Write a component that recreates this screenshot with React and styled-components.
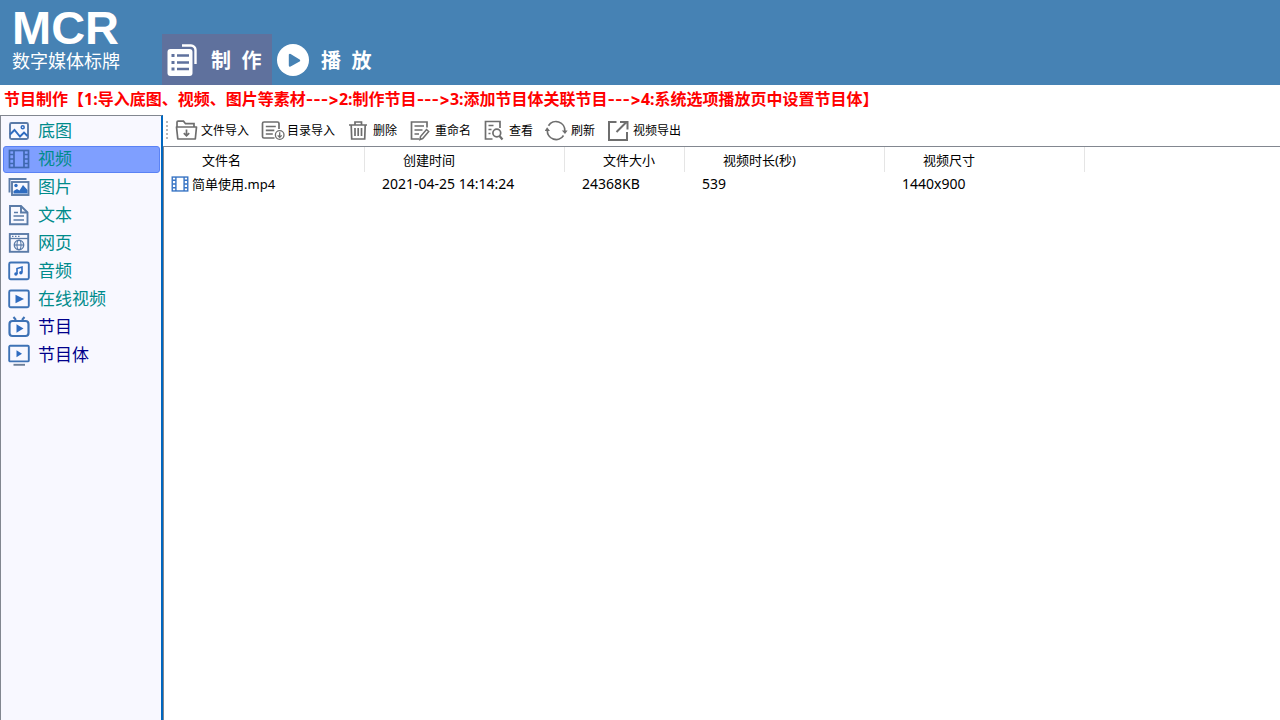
import { useState } from 'react';
import styled, { createGlobalStyle } from 'styled-components';

const GlobalStyle = createGlobalStyle`
  * {
    box-sizing: border-box;
  }

  html, body, #root {
    height: 100%;
  }

  body {
    margin: 0;
    background: #fff;
    color: #000;
    font-family: "Noto Sans", "Noto Sans CJK SC", sans-serif;
  }

  button {
    margin: 0;
    padding: 0;
    border: 0;
    background: none;
    color: inherit;
    font: inherit;
    cursor: pointer;
  }

  svg {
    display: block;
    flex-shrink: 0;
  }
`

/* ---------- header icons ---------- */

const MakeIcon = () => (
  <svg width="32" height="34" viewBox="1 0 32 34" fill="none">
    <path d="M16 2.5h9a4.5 4.5 0 0 1 4.5 4.5v14" stroke="#fff" strokeWidth="2.4" />
    <rect x="1.500" y="6" width="25" height="27" rx="3" fill="#fff" />
    <path d="M5.500 12.500h3M5.500 19.500h3M5.500 26h3" stroke="#5f719d" strokeWidth="3" />
    <path d="M11 12.500h12M11 19.500h12M11 26h12" stroke="#5f719d" strokeWidth="2.600" />
  </svg>
)

const PlayIcon = () => (
  <svg width="32" height="32" viewBox="0 0 32 32">
    <circle cx="16" cy="16" r="16" fill="#fff" />
    <path d="M13 11v10.500l9-5z" fill="#4682b4" stroke="#4682b4" strokeWidth="2.400" strokeLinejoin="round" />
  </svg>
)

/* ---------- sidebar icons ---------- */

const SideSvg = ({ children }) => (
  <svg width="22" height="22" viewBox="0 0 22 22" fill="none" stroke="#5b7ba8" strokeWidth="1.900">
    {children}
  </svg>
)

const BaseIcon = () => (
  <SideSvg>
    <rect x="2" y="3" width="18" height="16" rx="1.500" />
    <circle cx="14.700" cy="7.300" r="1.500" stroke="#2f6cc0" strokeWidth="1.500" />
    <path d="M2 14.500l4.500-4.500 5.500 6.500 4-4 3.500 3.500" stroke="#2f6cc0" />
  </SideSvg>
)

const FilmIcon = ({ size = 22, frame = '#3f68b0', fill = 'none' }) => (
  <svg width={size} height={size} viewBox="0 0 22 22" fill="none" stroke={frame} strokeWidth="1.700">
    <rect x="1.500" y="2.500" width="19" height="17" fill={fill} />
    <path d="M6 2.500v17M16 2.500v17" />
    <path d="M2 6.500h4M2 11h4M2 15.500h4M16 6.500h4M16 11h4M16 15.500h4" />
  </svg>
)

const PictureIcon = () => (
  <SideSvg>
    <path d="M1.500 16.500V3h17" />
    <rect x="4" y="6" width="16.500" height="13" />
    <circle cx="8" cy="9.500" r="1.700" fill="#2f6cc0" stroke="none" />
    <path d="M5.500 17.500V15l3.500-2 2.500 1.500 3.500-5.500 4.500 5v3.500z" fill="#2f6cc0" stroke="none" />
  </SideSvg>
)

const TextIcon = () => (
  <SideSvg>
    <path d="M13 2H2v18.200h17.500V8.500z" />
    <path d="M13 2v6.500h6.500" />
    <path d="M6 8.500h4M5.500 12h10.500M5.500 16h10.500" strokeWidth="1.700" />
  </SideSvg>
)

const WebIcon = () => (
  <SideSvg>
    <rect x="1.800" y="2" width="18.400" height="17.800" />
    <path d="M2 6.500h18" strokeWidth="1.300" />
    <path d="M4 4.400h1.500M7 4.400h1.500M10 4.400h1.500" strokeWidth="1.300" />
    <circle cx="11" cy="13" r="4.700" strokeWidth="1.400" />
    <ellipse cx="11" cy="13" rx="2" ry="4.700" strokeWidth="1.100" />
    <path d="M6.300 13h9.400" strokeWidth="1.200" />
  </SideSvg>
)

const AudioIcon = () => (
  <SideSvg>
    <rect x="1.200" y="2.500" width="19.600" height="16.800" rx="1.500" stroke="#3d72b5" />
    <path d="M9 14V8.500L14 7v5.500" stroke="#2f6cc0" strokeWidth="1.600" />
    <circle cx="7.900" cy="14" r="1.700" fill="#2f6cc0" stroke="none" />
    <circle cx="12.900" cy="12.800" r="1.700" fill="#2f6cc0" stroke="none" />
  </SideSvg>
)

const OnlineIcon = () => (
  <SideSvg>
    <rect x="1.200" y="2.500" width="19.600" height="16.800" rx="1.500" stroke="#3d72b5" />
    <path d="M7.500 6.800v8.400l8.500-4.200z" fill="#2f6cc0" stroke="none" />
  </SideSvg>
)

const ProgramIcon = () => (
  <SideSvg>
    <rect x="1.500" y="5" width="19" height="15" rx="3" stroke="#3d72b5" strokeWidth="2.200" />
    <path d="M5.500 1l2.500 3M16.500 1l-2.500 3" stroke="#3d72b5" strokeWidth="2" />
    <path d="M8.500 8.200v8.600l7-4.300z" fill="#2f6cc0" stroke="none" />
  </SideSvg>
)

const ProgramSetIcon = () => (
  <SideSvg>
    <rect x="1.200" y="1.800" width="19.600" height="15.600" rx="1" stroke="#3d72b5" />
    <path d="M8.500 6.200v7l5.500-3.500z" fill="#2f6cc0" stroke="none" />
    <path d="M5.500 20.800h11.500" stroke="#6d7f98" />
  </SideSvg>
)

/* ---------- toolbar icons ---------- */

const ToolSvg = ({ children }) => (
  <svg width="24" height="24" viewBox="0 0 24 24" fill="none" stroke="#6e6e6e" strokeWidth="1.700">
    {children}
  </svg>
)

const FolderInIcon = () => (
  <ToolSvg>
    <path d="M2 9V4.200q0-1 1-1h5.500l2 2.500h8.500V9" />
    <path d="M1.500 9h20l-1.200 12H2.800z" strokeLinejoin="round" />
    <path d="M11.500 11.500v6.500M8.800 15.200l2.700 2.700 2.700-2.700" />
  </ToolSvg>
)

const ListInIcon = () => (
  <ToolSvg>
    <path d="M18 11V5.500Q18 4 16.500 4H3Q1.500 4 1.500 5.500v13Q1.500 20 3 20h10.500" />
    <path d="M4.800 8.500h10M4.800 12.300h8.500M4.800 16h7" />
    <circle cx="18.700" cy="17" r="4.300" strokeWidth="1.300" />
    <path d="M18.700 14.200v5M16.700 17.400l2 2 2-2" strokeWidth="1.300" />
  </ToolSvg>
)

const TrashIcon = () => (
  <ToolSvg>
    <path d="M2 7h18M8 7V4h6.500v3M4.200 7l.5 14h13l.5-14" />
    <path d="M8 10v8M11.200 10v8M14.500 10v8" />
  </ToolSvg>
)

const RenameIcon = () => (
  <ToolSvg>
    <path d="M18 9.500V4H2.500v17H10" />
    <path d="M5.500 8h9.500M5.500 12h8M5.500 16h4.500" />
    <path d="M17.500 11.500l2.200 2-6 7-2.800 1 .6-3z" strokeWidth="1.500" />
  </ToolSvg>
)

const ViewIcon = () => (
  <ToolSvg>
    <path d="M17 10V3.500H2.500V21H9.500" />
    <path d="M5.500 7.500h5M5.500 11.500h3M5.500 15.500h2" />
    <circle cx="13.800" cy="15" r="3.900" />
    <path d="M16.500 18l3 3.500" strokeWidth="2.200" />
  </ToolSvg>
)

const RefreshIcon = () => (
  <ToolSvg>
    <path d="M3.500 7.800A8.800 8.800 0 0 1 19.800 13M2.300 12.500A8.800 8.800 0 0 0 18.500 17.500" />
    <path d="M-.3 13l2.400-3.800L5 13zM16.800 12.500H22.600L20 16z" fill="#6e6e6e" stroke="none" />
  </ToolSvg>
)

const ExportIcon = () => (
  <ToolSvg>
    <path d="M9.500 4H2v18h18V14" strokeWidth="2" />
    <path d="M9.500 14L19.500 4M13 4h7.500v7.500" strokeWidth="2" />
  </ToolSvg>
)

const menu = [
  { label: '底图', icon: BaseIcon },
  { label: '视频', icon: FilmIcon },
  { label: '图片', icon: PictureIcon },
  { label: '文本', icon: TextIcon },
  { label: '网页', icon: WebIcon },
  { label: '音频', icon: AudioIcon },
  { label: '在线视频', icon: OnlineIcon },
  { label: '节目', icon: ProgramIcon, program: true },
  { label: '节目体', icon: ProgramSetIcon, program: true },
]

const tools = [
  { label: '文件导入', icon: FolderInIcon },
  { label: '目录导入', icon: ListInIcon },
  { label: '删除', icon: TrashIcon },
  { label: '重命名', icon: RenameIcon },
  { label: '查看', icon: ViewIcon },
  { label: '刷新', icon: RefreshIcon },
  { label: '视频导出', icon: ExportIcon },
]

const columns = [
  { label: '文件名', width: 201 },
  { label: '创建时间', width: 200 },
  { label: '文件大小', width: 120 },
  { label: '视频时长(秒)', width: 200 },
  { label: '视频尺寸', width: 200 },
]

const files = [
  { name: '简单使用.mp4', created: '2021-04-25 14:14:24', size: '24368KB', duration: '539', dimension: '1440x900' },
]

export default function App() {
  const [tab, setTab] = useState('make');
  const [current, setCurrent] = useState('视频');

  return (
    <>
      <GlobalStyle />
      <Page>
        <Header>
          <Brand>
            <BrandName>MCR</BrandName>
            <BrandSub>数字媒体标牌</BrandSub>
          </Brand>
          <Tabs>
            <Tab $active={tab === 'make'} onClick={() => setTab('make')}><MakeIcon />{'制  作'}</Tab>
            <Tab $active={tab === 'play'} onClick={() => setTab('play')}><PlayIcon />{'播  放'}</Tab>
          </Tabs>
        </Header>

        <Steps>
          节目制作【1:导入底图、视频、图片等素材<Arrow>---&gt;</Arrow>2:制作节目<Arrow>---&gt;</Arrow>3:添加节目体关联节目<Arrow>---&gt;</Arrow>4:系统选项播放页中设置节目体】
        </Steps>

        <Body>
          <Sidebar>
            {menu.map(({ label, icon: Icon, program }) => (
              <MenuItem
                key={label}
                $active={label === current}
                $program={program}
                onClick={() => setCurrent(label)}
              >
                <Icon />{label}
              </MenuItem>
            ))}
          </Sidebar>

          <Content>
            <Toolbar>
              <Grip />
              {tools.map(({ label, icon: Icon }) => (
                <Tool key={label}><Icon />{label}</Tool>
              ))}
            </Toolbar>
            <List>
              <Table>
                <colgroup>
                  {columns.map((c) => <Col key={c.label} $width={c.width} />)}
                </colgroup>
                <thead>
                  <tr>{columns.map((c) => <th key={c.label}>{c.label}</th>)}</tr>
                </thead>
                <tbody>
                  {files.map((f) => (
                    <tr key={f.name}>
                      <td><FileName><FilmIcon size={18} frame="#3673c4" fill="#fff" />{f.name}</FileName></td>
                      <td>{f.created}</td>
                      <td>{f.size}</td>
                      <td>{f.duration}</td>
                      <td>{f.dimension}</td>
                    </tr>
                  ))}
                </tbody>
              </Table>
            </List>
          </Content>
        </Body>
      </Page>
    </>
  )
}

const Page = styled.div`
  display: flex;
  flex-direction: column;
  min-height: 100%;
`

const Header = styled.header`
  display: flex;
  align-items: flex-end;
  height: 85px;
  background: #4682b4;
  color: #fff;
`

const Brand = styled.div`
  width: 162px;
  padding: 0 0 12px 12px;
`

const BrandName = styled.div`
  font: bold 47px/42px "Liberation Sans", sans-serif;
`

const BrandSub = styled.div`
  font-size: 18px;
  line-height: 24px;
`

const Tabs = styled.nav`
  display: flex;
`

const Tab = styled.button`
  display: flex;
  align-items: center;
  gap: 12px;
  width: 110px;
  height: 51px;
  padding-left: 5px;
  background: ${({ $active }) => ($active ? '#5f719d' : 'transparent')};
  font-size: 20px;
  font-weight: bold;
  white-space: pre;
`

const Steps = styled.p`
  margin: 0;
  padding: 0 4px 2px;
  color: #f00;
  font-size: 16px;
  font-weight: bold;
  line-height: 28px;
`

const Arrow = styled.span`
  font-family: Inter, sans-serif;
  font-variant-ligatures: none;
`

const Body = styled.div`
  display: flex;
  flex: 1;
`

const Sidebar = styled.nav`
  display: flex;
  flex-direction: column;
  gap: 1px;
  width: 163px;
  padding: 2px 1px 0 2px;
  border-top: 1px solid #828790;
  border-left: 1px solid #828790;
  border-right: 2px solid #0067c0;
  background: #f8f8ff;
`

const MenuItem = styled.button`
  display: flex;
  align-items: center;
  gap: 8px;
  height: 27px;
  padding: 0 0 2px 4px;
  border: 1px solid ${({ $active }) => ($active ? '#5a82f5' : 'transparent')};
  border-radius: 3px;
  background: ${({ $active }) => ($active ? '#7f9fff' : 'transparent')};
  color: ${({ $program }) => ($program ? '#00008b' : '#008b8b')};
  font-size: 17px;
  line-height: 22px;
`

const Content = styled.main`
  display: flex;
  flex: 1;
  flex-direction: column;
`

const Toolbar = styled.div`
  display: flex;
  align-items: center;
  gap: 12px;
  height: 31px;
  padding: 0 0 2px 3px;
`

const Grip = styled.span`
  width: 2px;
  height: 18px;
  margin-right: -5px;
  background: repeating-linear-gradient(#b8b8b8 0 2px, transparent 2px 4px);
`

const Tool = styled.button`
  display: flex;
  align-items: center;
  gap: 2px;
  font-size: 12px;
`

const List = styled.div`
  flex: 1;
  border-top: 1px solid #828790;
  border-left: 1px solid #828790;
`

const Table = styled.table`
  table-layout: fixed;
  width: 921px;
  border-collapse: separate;
  border-spacing: 0;

  th {
    height: 25px;
    padding: 0 0 0 38px;
    border-right: 1px solid #e5e5e5;
    font-size: 13px;
    font-weight: normal;
    line-height: 20px;
    text-align: left;
  }

  td {
    height: 24px;
    padding: 0 0 0 17px;
    font-size: 14px;
    line-height: 20px;
  }

  td:first-child {
    padding-left: 7px;
  }
`

const Col = styled.col`
  width: ${({ $width }) => $width}px;
`

const FileName = styled.div`
  display: flex;
  align-items: center;
  gap: 3px;
  font-size: 13px;
`
